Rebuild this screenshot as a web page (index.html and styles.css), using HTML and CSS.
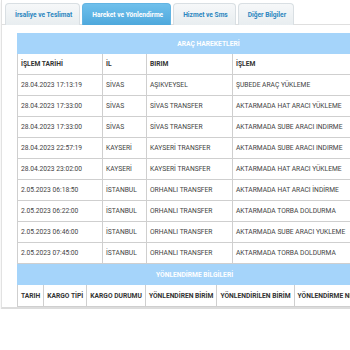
FILE: index.html
```html
<!DOCTYPE html>
<html>
<head>
  <title>Kargo Detay</title>
  <link rel="stylesheet" href="styles.css">
</head>
<body>

  <div class="tabs">
    <ul class="tabnav">
      <li><a href="#">İrsaliye ve Teslimat</a></li>
      <li class="active"><a href="#">Hareket ve Yönlendirme</a></li>
      <li><a href="#">Hizmet ve Sms</a></li>
      <li><a href="#">Diğer Bilgiler</a></li>
    </ul>

    <div class="panel">
      <table class="grid moves">
        <tr><th class="bar" colspan="4">ARAÇ HAREKETLERİ</th></tr>
        <tr class="head">
          <td>İŞLEM TARİHİ</td><td>İL</td><td>BIRIM</td><td>İŞLEM</td>
        </tr>
        <tr><td>28.04.2023 17:13:19</td><td>SİVAS</td><td>AŞIKVEYSEL</td><td>ŞUBEDE ARAÇ YÜKLEME</td></tr>
        <tr><td>28.04.2023 17:33:00</td><td>SİVAS</td><td>SİVAS TRANSFER</td><td>AKTARMADA HAT ARACI YÜKLEME</td></tr>
        <tr><td>28.04.2023 17:33:00</td><td>SİVAS</td><td>SİVAS TRANSFER</td><td>AKTARMADA SUBE ARACI INDIRME</td></tr>
        <tr><td>28.04.2023 22:57:19</td><td>KAYSERİ</td><td>KAYSERİ TRANSFER</td><td>AKTARMADA SUBE ARACI INDIRME</td></tr>
        <tr><td>28.04.2023 23:02:00</td><td>KAYSERİ</td><td>KAYSERİ TRANSFER</td><td>AKTARMADA HAT ARACI YÜKLEME</td></tr>
        <tr><td>2.05.2023 06:18:50</td><td>İSTANBUL</td><td>ORHANLI TRANSFER</td><td>AKTARMADA HAT ARACI İNDİRME</td></tr>
        <tr><td>2.05.2023 06:22:00</td><td>İSTANBUL</td><td>ORHANLI TRANSFER</td><td>AKTARMADA TORBA DOLDURMA</td></tr>
        <tr><td>2.05.2023 06:46:00</td><td>İSTANBUL</td><td>ORHANLI TRANSFER</td><td>AKTARMADA SUBE ARACI YUKLEME</td></tr>
        <tr><td>2.05.2023 07:45:00</td><td>İSTANBUL</td><td>ORHANLI TRANSFER</td><td>AKTARMADA TORBA DOLDURMA</td></tr>
      </table>

      <table class="grid redirect">
        <tr><th class="bar" colspan="6">YÖNLENDİRME BİLGİLERİ</th></tr>
        <tr class="head">
          <td>TARIH</td><td>KARGO TİPİ</td><td>KARGO DURUMU</td>
          <td>YÖNLENDİREN BİRİM</td><td>YÖNLENDİRİLEN BİRİM</td><td>YÖNLENDİRME NEDENİ</td>
        </tr>
      </table>
    </div>
  </div>

</body>
</html>
```

FILE: styles.css
```css
body{
    margin: 0;
    background: #fff;
    font-family: Roboto, "Liberation Sans", sans-serif;
    color: #444;
}

.tabs{
    width: 560px;
    margin-left: 1px;
    border-left: 1px solid #e2e2e2;
    border-bottom: 2px solid #dcdcdc;
    box-shadow: 0 2px 3px rgba(0, 0, 0, 0.08);
}

.tabnav{
    list-style: none;
    margin: 0;
    padding: 3px 0 0 3px;
    display: flex;
    gap: 2px;
    border-bottom: 1px solid #dfdfdf;
}

.tabnav li{
    margin-bottom: -1px;
}

.tabnav a{
    display: block;
    height: 21px;
    line-height: 22px;
    padding: 0 7px 0 9px;
    font-size: 6.6px;
    font-weight: bold;
    color: #2b86c0;
    text-decoration: none;
    background: linear-gradient(#f6f8f9, #e8edf0);
    border: 1px solid #d9dfe3;
    border-bottom: none;
    border-radius: 4px 4px 0 0;
}

.tabnav .active a{
    color: #fff;
    background: linear-gradient(#6fc0ec, #4ea8dc);
    border-color: #62b4e2;
}

.panel{
    padding: 8px 0 0 15px;
}

.grid{
    border-collapse: collapse;
    font-size: 6.7px;
    white-space: nowrap;
}

.grid td{
    border: 1px solid #cfcfcf;
    height: 20px;
    padding: 0 3px;
    text-align: left;
}

.grid .bar{
    background: #a5d4fa;
    color: #fff;
    font-weight: bold;
    height: 19px;
    padding: 0;
    border: 1px solid #a5d4fa;
}

.grid .head td{
    font-weight: bold;
    color: #333;
}

.moves td:nth-child(1){ width: 78px; }
.moves td:nth-child(2){ width: 37px; }
.moves td:nth-child(3){ width: 79px; }
.moves td:nth-child(4){ width: 160px; }

.redirect .head td{
    height: 21px;
}
```
